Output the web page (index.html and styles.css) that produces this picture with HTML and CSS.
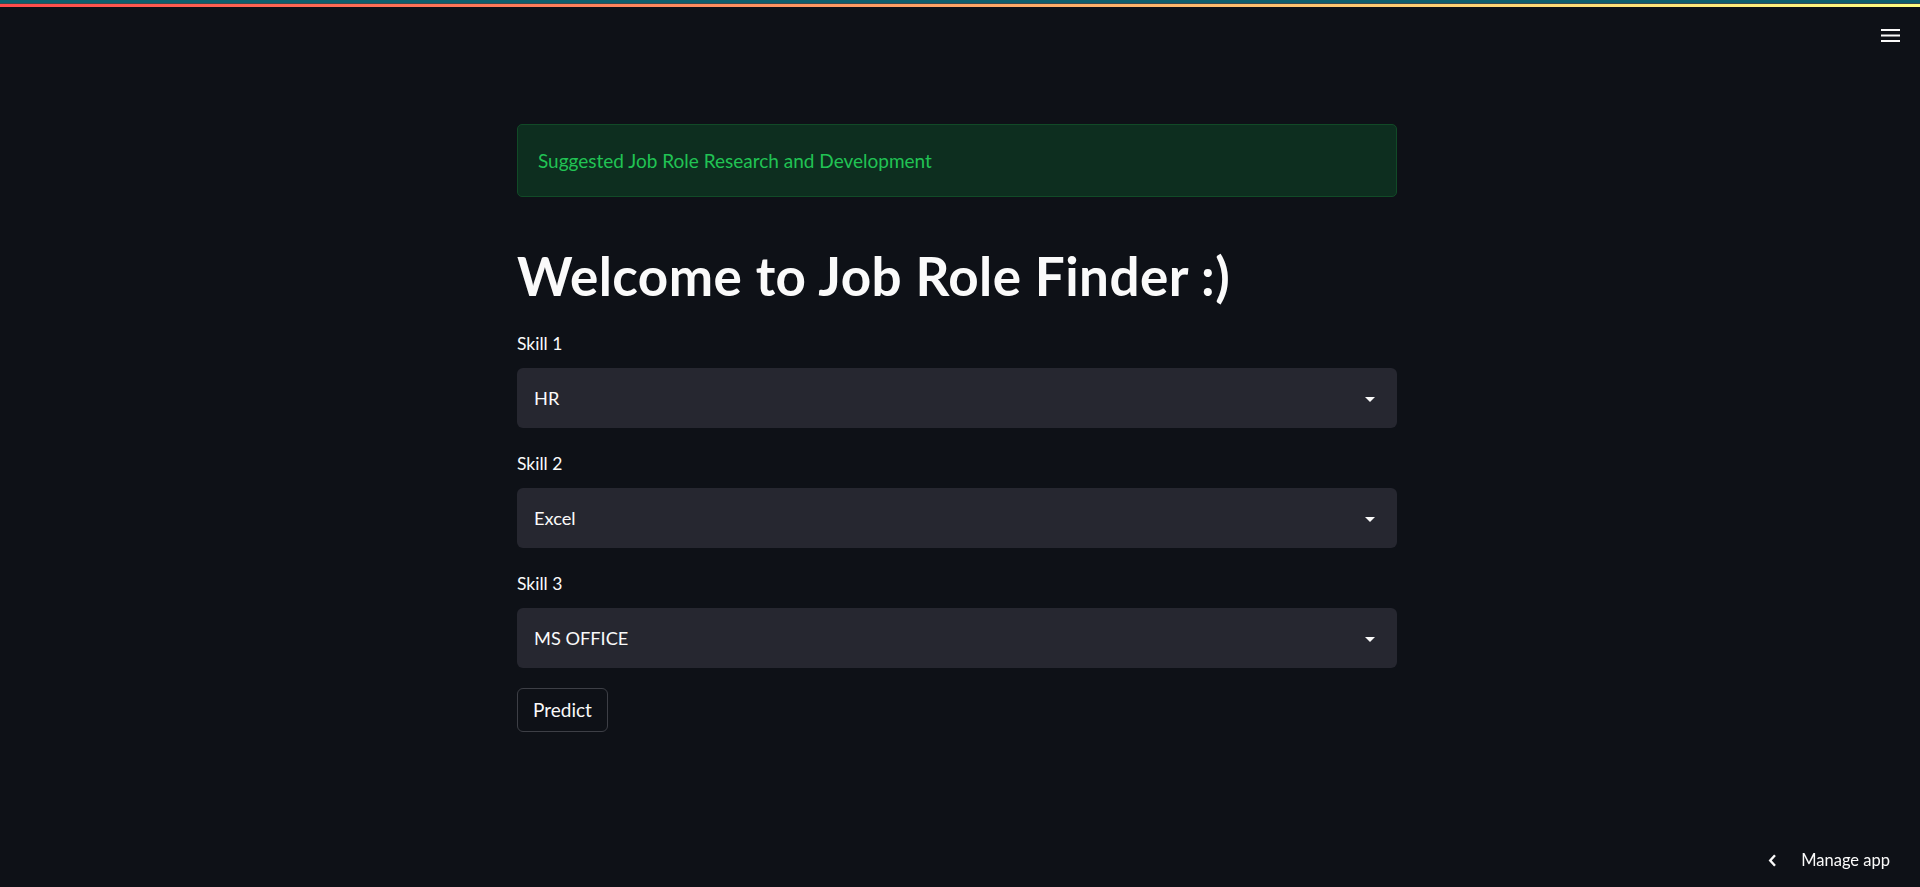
FILE: index.html
```html
<!DOCTYPE html>
<html lang="en">
<head>
<meta charset="utf-8">
<title>Job Role Finder</title>
<link rel="stylesheet" href="styles.css">
</head>
<body>
<header class="header">
  <div class="bar-teal"></div>
  <div class="bar-decoration"></div>
  <button class="menu" aria-label="Main menu">
    <svg width="19" height="14" viewBox="0 0 19 14" fill="#fafafa"><rect x="0" y="0" width="19" height="2"/><rect x="0" y="5.5" width="19" height="2"/><rect x="0" y="11" width="19" height="2"/></svg>
  </button>
</header>
<main class="app">
  <section class="block">
    <div class="alert-success">Suggested Job Role Research and Development</div>
    <h1 class="title">Welcome to Job Role Finder :)</h1>
    <div class="widget">
      <label class="label">Skill 1</label>
      <div class="select"><span>HR</span><svg class="caret" width="10" height="5" viewBox="0 0 10 5"><path d="M0 0h10L5 5z" fill="#fafafa"/></svg></div>
    </div>
    <div class="widget">
      <label class="label">Skill 2</label>
      <div class="select"><span>Excel</span><svg class="caret" width="10" height="5" viewBox="0 0 10 5"><path d="M0 0h10L5 5z" fill="#fafafa"/></svg></div>
    </div>
    <div class="widget">
      <label class="label">Skill 3</label>
      <div class="select"><span>MS OFFICE</span><svg class="caret" width="10" height="5" viewBox="0 0 10 5"><path d="M0 0h10L5 5z" fill="#fafafa"/></svg></div>
    </div>
    <div class="actions">
      <button class="btn">Predict</button>
    </div>
  </section>
</main>
<div class="manage">
  <svg width="9" height="13" viewBox="0 0 9 13"><path d="M7 1.2L2.2 6.5 7 11.8" fill="none" stroke="#fafafa" stroke-width="2.4"/></svg>
  <span>Manage app</span>
</div>
</body>
</html>
```

FILE: styles.css
```css
* { box-sizing: border-box; }
html, body { margin: 0; padding: 0; }
body {
  background: #0e1117;
  color: #fafafa;
  font-family: "Lato", "Noto Sans", sans-serif;
  height: 887px;
  overflow: hidden;
}
.header {
  position: fixed;
  top: 0; left: 0; right: 0;
  height: 60px;
  z-index: 10;
}
.bar-teal { height: 3px; background: #0e5e6d; }
.bar-decoration {
  height: 4px;
  background: linear-gradient(90deg, #ff4b4b, #fffd80);
  border-top: 1px solid #3a4a50;
}
.menu {
  position: absolute;
  top: 29px;
  right: 20px;
  padding: 0;
  border: 0;
  background: transparent;
  line-height: 0;
}
.app {
  display: flex;
  justify-content: center;
  padding: 124px 6px 0 0;
}
.block {
  width: 880px;
  display: flex;
  flex-direction: column;
}
.alert-success {
  background: #0d2e1f;
  border: 1px solid #114a27;
  border-radius: 5px;
  color: #21c354;
  font-size: 19px;
  line-height: 31px;
  padding: 20px;
  margin-bottom: 20px;
}
.title {
  margin: 0;
  padding-top: 26px;
  font-size: 53px;
  line-height: 65px;
  height: 91px;
  font-weight: 700;
  color: #fafafa;
  letter-spacing: 0.45px;
}
.widget {
  display: flex;
  flex-direction: column;
  margin-top: 20px;
}
.label {
  font-size: 17.5px;
  line-height: 28px;
  height: 28px;
  padding-top: 2px;
  margin-bottom: 12px;
  color: #fafafa;
}
.select {
  height: 60px;
  background: #262730;
  border-radius: 6px;
  display: flex;
  align-items: center;
  justify-content: space-between;
  padding: 0 22px 0 17px;
  font-size: 18.2px;
  line-height: 60px;
}
.caret { display: block; margin-top: 2px; }
.actions { margin-top: 20px; }
.btn {
  height: 44px;
  padding: 0 15px;
  background: transparent;
  color: #fafafa;
  border: 1px solid #3d3f46;
  border-radius: 6px;
  font-family: inherit;
  font-size: 19px;
  line-height: 42px;
}
.manage {
  position: fixed;
  right: 30px;
  bottom: 17px;
  display: flex;
  align-items: center;
  gap: 24px;
  font-size: 16.5px;
  line-height: 20px;
  color: #fafafa;
}
.manage svg { display: block; }
```
